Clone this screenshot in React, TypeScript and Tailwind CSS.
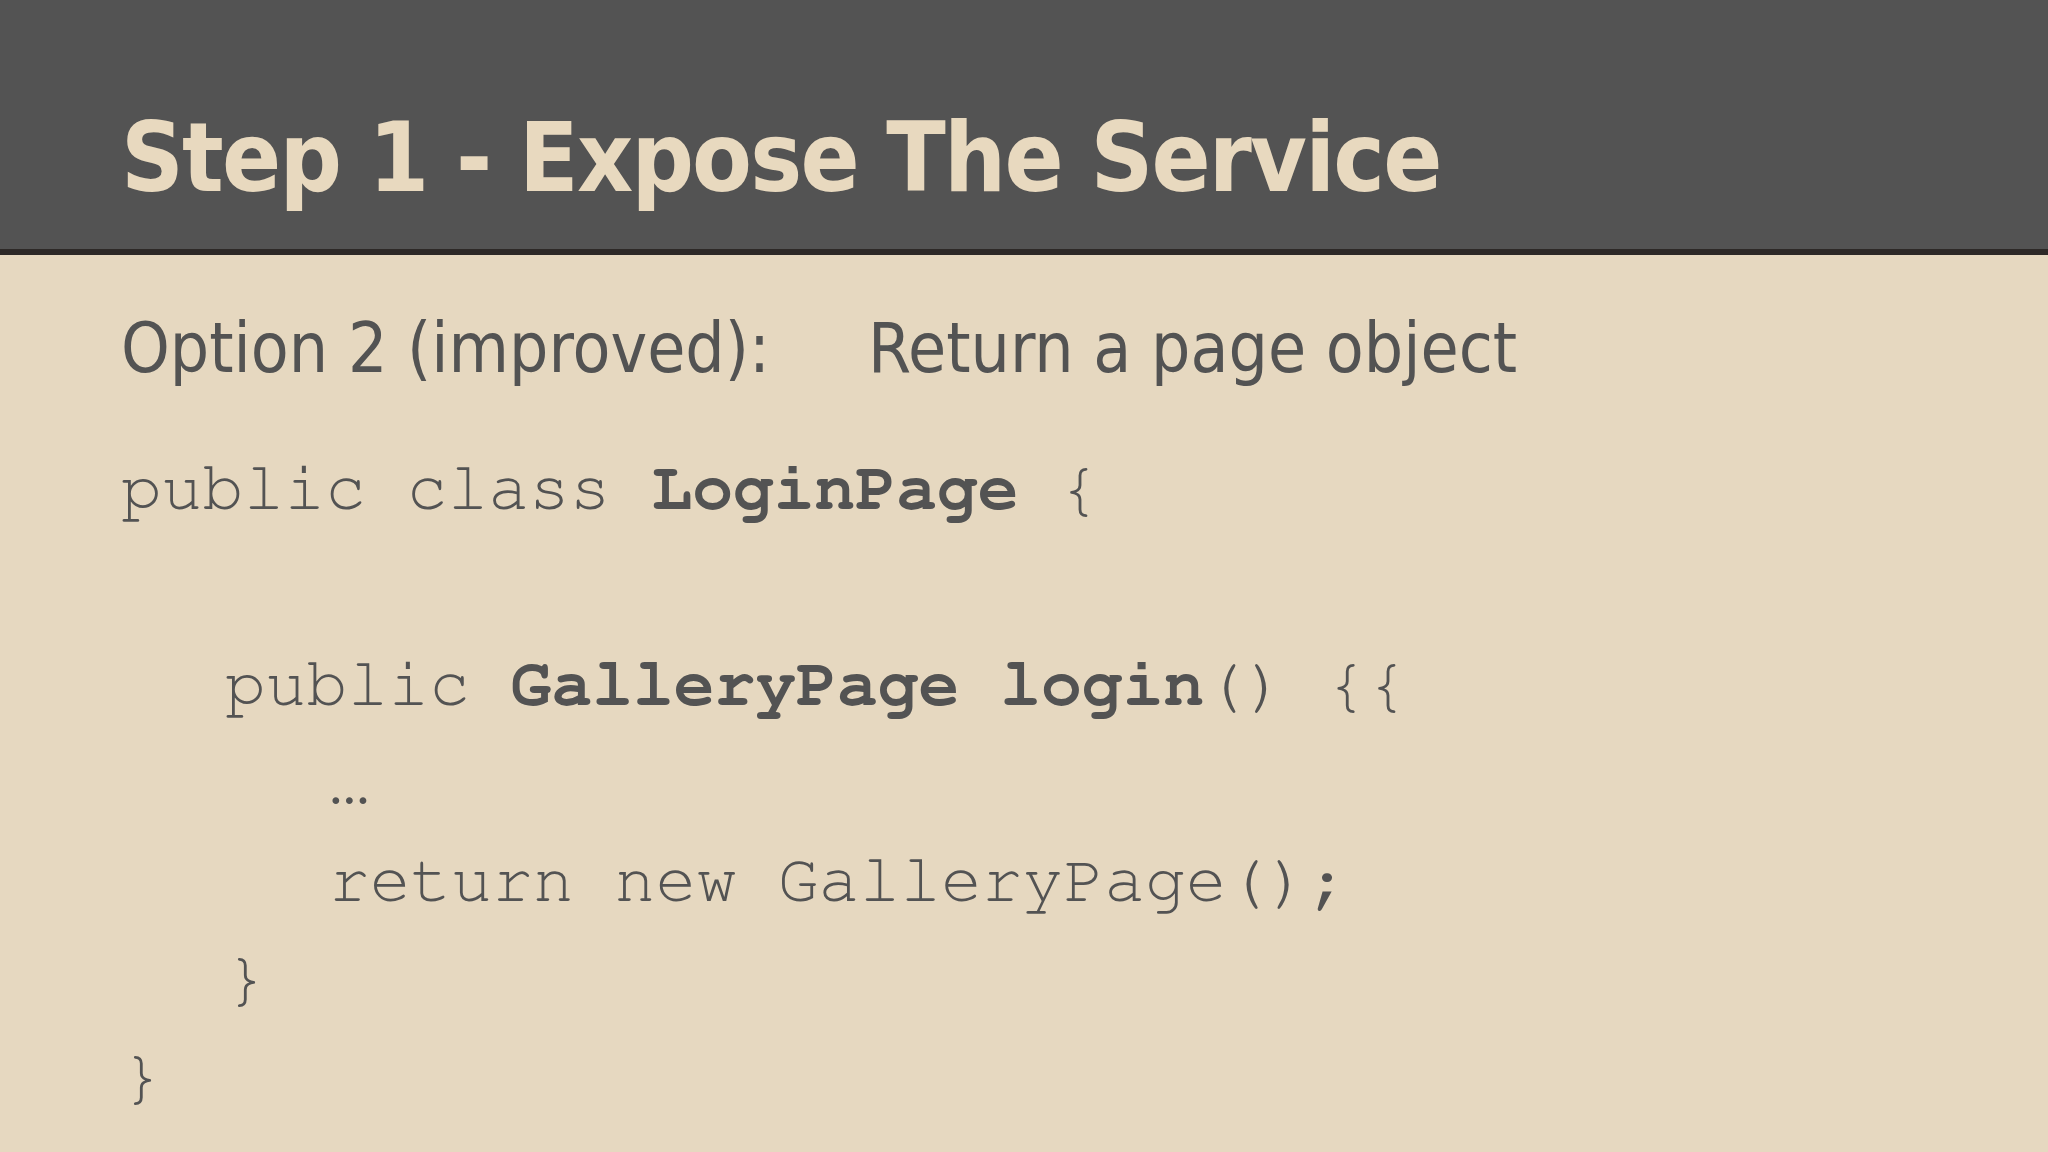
export default function App() {
  return (
    <div className="w-[2048px] h-[1152px] overflow-hidden flex flex-col bg-[#e6d8c0]">
      {/* title bar */}
      <div className="h-[255px] shrink-0 bg-[#535353] border-b-[6px] border-[#2d2927]">
        <h1 className="pt-[109px] pl-[121px] text-[97px] leading-none font-bold tracking-[-1.8px] text-[#e8d9bf] font-['DejaVu_Sans_Condensed','DejaVu_Sans',sans-serif]">
          Step 1 - Expose The Service
        </h1>
      </div>

      {/* body */}
      <div className="pl-[121px] text-[#535353]">
        <p className="mt-[59px] text-[69px] leading-none font-['DejaVu_Sans_Condensed','DejaVu_Sans',sans-serif] flex">
          <span className="w-[747px]">Option 2 (improved):</span>
          <span>Return a page object</span>
        </p>

        <pre className="mt-[57px] text-[68px] leading-[98px] font-['FreeMono','Nimbus_Mono_PS','Courier_New','Liberation_Mono',monospace]">
          <div>
            public class <b>LoginPage</b> {"{"}
          </div>
          <div>&nbsp;</div>
          <div className="pl-[104px]">
            public <b>GalleryPage</b> <b>login</b>() {"{{"}
          </div>
          <div className="pl-[208px]">…</div>
          <div className="pl-[208px]">return new GalleryPage();</div>
          <div className="pl-[104px]">{"}"}</div>
          <div>{"}"}</div>
        </pre>
      </div>
    </div>
  );
}
